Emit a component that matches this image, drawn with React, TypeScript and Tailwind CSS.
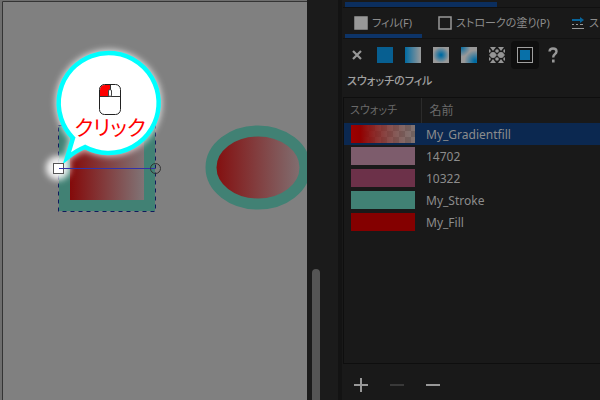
import React from "react";

const kana = "font-['Noto_Sans','Noto_Sans_CJK_JP',sans-serif] [font-feature-settings:'palt']";

const swatches = [
  { name: "My_Gradientfill", fill: "gradient" },
  { name: "14702", fill: "bg-[#7d5c6c]" },
  { name: "10322", fill: "bg-[#6c3149]" },
  { name: "My_Stroke", fill: "bg-[#418174]" },
  { name: "My_Fill", fill: "bg-[#840000]" },
];

const balloon = "M67 158L73 138A50 50 0 1 1 85 147Q77 150 67 158Z";

function Canvas() {
  return (
    <main className="relative min-w-0 flex-1 overflow-hidden bg-[#808080]">
      <svg width="600" height="400" className="absolute left-0 top-0" role="img" aria-label="キャンバス">
        <defs>
          <linearGradient id="fill">
            <stop offset="0" stopColor="#840a0a" />
            <stop offset="1" stopColor="#807476" />
          </linearGradient>
          <filter id="glow" x="-50%" y="-50%" width="200%" height="200%">
            <feGaussianBlur stdDeviation="3" />
          </filter>
        </defs>
        <path d="M0 0H600V1H2V400H0Z" fill="#6e6e6e" />
        <path d="M2.5 400V1.5H600" fill="none" stroke="#343434" />
        <rect x="59" y="126" width="96" height="85" fill="#418174" />
        <rect x="70" y="136" width="74" height="64" fill="url(#fill)" />
        <rect x="58.5" y="125.5" width="97" height="86" fill="none" stroke="#808080" />
        <rect x="58.5" y="125.5" width="97" height="86" fill="none" stroke="#101a5c" strokeDasharray="4 4" />
        <ellipse cx="258" cy="167.5" rx="47" ry="36.5" fill="url(#fill)" stroke="#418174" strokeWidth="11" />
        <circle cx="58" cy="168" r="12" fill="#fff" opacity=".9" filter="url(#glow)" />
        <path d={balloon} fill="#fff" stroke="#fff" strokeWidth="7" opacity=".7" filter="url(#glow)" />
        <path d={balloon} fill="#fff" stroke="#00ffff" strokeWidth="4.5" />
        <rect x="53.5" y="163.5" width="10" height="10" fill="#fff" stroke="#555" />
        <path d="M59 168.5H155" stroke="#3232a8" />
        <circle cx="155.5" cy="168.5" r="5" fill="none" stroke="#333" />
        <path d="M100 96V90Q100 85 105 85H110V96Z" fill="#f00" />
        <rect x="99.5" y="84.5" width="21" height="30" rx="5" fill="none" stroke="#222" />
        <path d="M100 96.5H120M110.5 85V90" stroke="#333" />
        <rect x="108.5" y="89.5" width="3" height="7" rx="1.5" fill="#fff" stroke="#444" />
        <text x="110" y="135" textAnchor="middle" fill="#f00" className={kana + " text-[21px]"}>クリック</text>
      </svg>
    </main>
  );
}

function SquareIcon({ filled }: { filled?: boolean }) {
  return (
    <svg width="14" height="14" className="shrink-0" aria-hidden="true">
      <rect x="1" y="1" width="12" height="12" fill={filled ? "#989898" : "none"} stroke="#989898" strokeWidth="1.5" />
    </svg>
  );
}

function StrokeIcon() {
  return (
    <svg width="14" height="14" viewBox="0 0 14 14" className="shrink-0" aria-hidden="true">
      <path d="M1 4H10" stroke="#08649a" strokeWidth="2" />
      <path d="M9 1L13 4L9 7Z" fill="#08649a" />
      <path d="M1 8.5H3M5 8.5H7M9 8.5H12M1 12.5H13" stroke="#989898" />
    </svg>
  );
}

function PaintIcon({ kind }: { kind: string }) {
  return (
    <svg width="16" height="16" viewBox="0 0 16 16" aria-hidden="true">
      {kind === "none" && <path d="M4 4L12 12M12 4L4 12" stroke="#989898" strokeWidth="2.2" />}
      {kind === "flat" && <rect width="16" height="16" fill="#075f91" />}
      {kind === "linear" && (
        <>
          <linearGradient id="lin"><stop offset="0" stopColor="#006ba2" /><stop offset="1" stopColor="#9a9a9a" /></linearGradient>
          <rect width="16" height="16" fill="url(#lin)" />
        </>
      )}
      {kind === "radial" && (
        <>
          <radialGradient id="rad"><stop offset=".1" stopColor="#006ba2" /><stop offset="1" stopColor="#999" /></radialGradient>
          <rect width="16" height="16" fill="url(#rad)" />
        </>
      )}
      {kind === "mesh" && (
        <>
          <radialGradient id="m1" cx="0" cy="0" r=".6"><stop offset="0" stopColor="#006ba2" /><stop offset="1" stopColor="#006ba2" stopOpacity="0" /></radialGradient>
          <radialGradient id="m2" cx=".9" cy=".9" r=".7"><stop offset=".1" stopColor="#006ba2" /><stop offset="1" stopColor="#006ba2" stopOpacity="0" /></radialGradient>
          <rect width="16" height="16" fill="#999" />
          <rect width="16" height="16" fill="url(#m1)" />
          <rect width="16" height="16" fill="url(#m2)" />
        </>
      )}
      {kind === "pattern" && (
        <g fill="#959595">
          {[4, 12].map((x) => (
            <React.Fragment key={x}>
              <circle cx={x} cy="8" r="3" />
              <path d={`M${x - 3} 0H${x + 3}L${x} 4ZM${x - 3} 16H${x + 3}L${x} 12Z`} />
            </React.Fragment>
          ))}
          {[4, 12].map((y) =>
            [0, 8, 16].map((x) => <circle key={x + "-" + y} cx={x} cy={y} r="1.8" />)
          )}
          <path d="M0 8H16" stroke="#959595" />
        </g>
      )}
      {kind === "swatch" && (
        <>
          <rect x=".5" y=".5" width="15" height="15" fill="none" stroke="#a0a0a0" />
          <rect x="3" y="3" width="10" height="10" fill="#0870a8" />
        </>
      )}
      {kind === "unknown" && (
        <>
          <path d="M4.500 4.500Q4.800 1.500 8 1.500Q11.500 1.500 11.500 4.500Q11.500 6 9.800 7.200Q8.200 8.300 8.200 10.500" fill="none" stroke="#989898" strokeWidth="2.4" />
          <rect x="7" y="12.5" width="2.6" height="3" fill="#989898" />
        </>
      )}
    </svg>
  );
}

const paints = [
  ["none", "塗りなし"],
  ["flat", "単一色"],
  ["linear", "線形グラデーション"],
  ["radial", "放射グラデーション"],
  ["mesh", "メッシュ"],
  ["pattern", "パターン"],
  ["swatch", "スウォッチ"],
  ["unknown", "未設定"],
];

function Gradient() {
  return (
    <svg width="64" height="18" className="block" aria-hidden="true">
      <defs>
        <pattern id="checks" width="12" height="12" patternUnits="userSpaceOnUse">
          <rect width="12" height="12" fill="#666" />
          <path d="M0 0H6V6H0ZM6 6H12V12H6Z" fill="#7c7c7c" />
        </pattern>
        <linearGradient id="alpha">
          <stop offset="0" stopColor="#9c0000" />
          <stop offset=".15" stopColor="#920000" />
          <stop offset="1" stopColor="#8d5a52" stopOpacity=".25" />
        </linearGradient>
      </defs>
      <rect width="64" height="18" fill="url(#checks)" />
      <rect width="64" height="18" fill="url(#alpha)" />
    </svg>
  );
}

export default function App() {
  return (
    <div className={"flex h-screen overflow-hidden bg-[#191919] text-[#8c8c8c] " + kana}>
      <Canvas />
      <div className="flex w-[31px] shrink-0 flex-col bg-[#1b1b1b] pl-[5px] pt-[269px]">
        <div className="w-2 flex-1 rounded-t-full bg-[#555555]" />
      </div>
      <aside className="flex w-[262px] shrink-0 flex-col overflow-hidden border-l-4 border-[#131313] pl-px">
        <div className="h-2 shrink-0 border-b border-[#101010] pl-0.5 pt-0.5">
          <div className="h-[5px] w-[152px] bg-[#0b2e5e]" />
        </div>
        <div role="tablist" className="flex h-[31px] shrink-0 gap-1 border-b border-[#121212] pl-0.5 text-[11px]">
          <button role="tab" aria-selected="true" className="flex w-[77px] shrink-0 items-center gap-1 whitespace-nowrap border-b-4 border-[#0d3468] pl-[9px] pt-1">
            <SquareIcon filled />フィル(F)
          </button>
          <button role="tab" aria-selected="false" className="flex w-[129px] shrink-0 items-center gap-1 whitespace-nowrap border-b-4 border-transparent pl-3 pt-1">
            <SquareIcon />ストロークの塗り(P)
          </button>
          <button role="tab" aria-selected="false" className="flex shrink-0 items-center gap-1 whitespace-nowrap border-b-4 border-transparent pl-3 pt-1">
            <StrokeIcon />ス
          </button>
        </div>
        <div className="flex shrink-0 pt-0.5">
          {paints.map(([kind, label]) => (
            <button key={kind} aria-label={label} className={"flex size-7 items-center justify-center rounded " + (kind === "swatch" ? "bg-[#0f0f0f]" : "")}>
              <PaintIcon kind={kind} />
            </button>
          ))}
        </div>
        <h2 className="shrink-0 pb-2 pl-1 pt-1 text-[11px] font-medium leading-4 text-[#a0a0a0]">スウォッチのフィル</h2>
        <div className="min-h-0 flex-1 border-y border-l border-[#0e0e0e]">
          <table className="w-full table-fixed border-collapse text-left">
            <thead>
              <tr className="h-[25px] text-[11px] text-[#6a6a6a]">
                <th className="w-[77px] border-r border-[#2b2b2b] py-0 pl-1.5 font-normal">スウォッチ</th>
                <th className="py-0 pl-2 text-xs font-normal">名前</th>
              </tr>
            </thead>
            <tbody className="text-xs">
              {swatches.map((s, i) => (
                <tr key={s.name} className={"h-[22px] " + (i === 0 ? "bg-[#0b2850]" : "")}>
                  <td className="py-0 pl-[7px]">
                    {s.fill === "gradient" ? <Gradient /> : <div className={"h-[18px] w-16 " + s.fill} />}
                  </td>
                  <td className="pb-0 pl-[5px] pt-0.5 leading-4">{s.name}</td>
                </tr>
              ))}
            </tbody>
          </table>
        </div>
        <div className="flex h-9 shrink-0 items-center pt-1.5 text-[#989898]">
          <button aria-label="追加" className="flex h-7 w-9 items-center justify-center">
            <svg width="14" height="14" aria-hidden="true"><path d="M0 7H14M7 0V14" stroke="currentColor" strokeWidth="2" /></svg>
          </button>
          <button aria-label="削除" disabled className="flex h-7 w-9 items-center justify-center text-[#393939]">
            <svg width="14" height="14" aria-hidden="true"><path d="M0 7H14" stroke="currentColor" strokeWidth="2" /></svg>
          </button>
          <button aria-label="未使用を削除" className="flex h-7 w-9 items-center justify-center">
            <svg width="14" height="14" aria-hidden="true"><path d="M0 7H14" stroke="currentColor" strokeWidth="2" /></svg>
          </button>
        </div>
      </aside>
    </div>
  );
}
